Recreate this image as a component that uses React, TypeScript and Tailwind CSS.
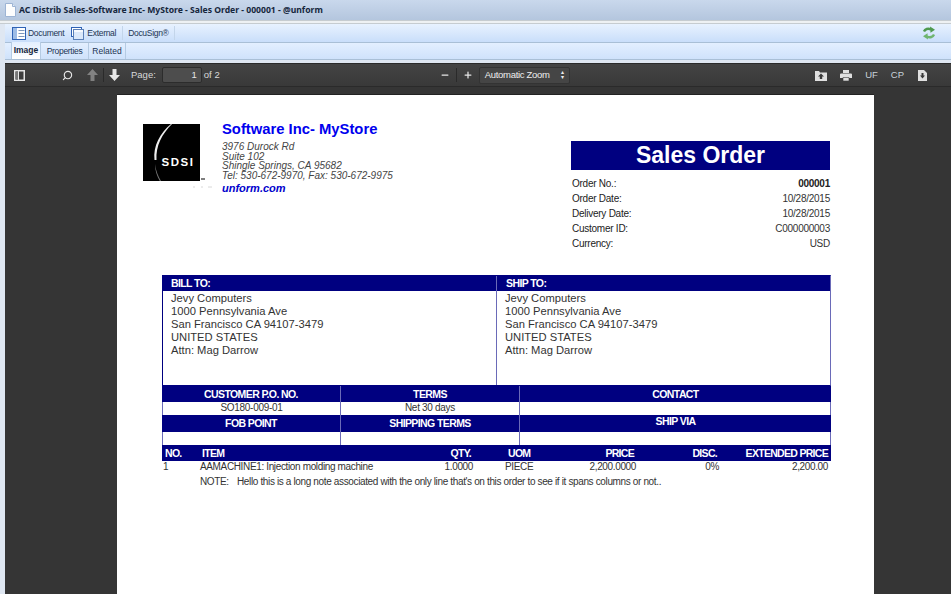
import { Search, Minus, Plus } from "lucide-react";

const SANS = "font-['Liberation_Sans',Arial,sans-serif]";
const NAVY = "bg-[#000080]";
const HEAD_COLS = "grid grid-cols-[37px_212px_57px_84px_79px_83px_1fr]";
const ROW_COLS = "grid grid-cols-[37px_216px_57px_80px_83px_83px_1fr]";

function DocIcon() {
  return (
    <svg width="11" height="14" viewBox="0 0 11 14">
      <path d="M.5.5h7l3 3v10H.5z" fill="#fdfdfd" stroke="#9db4d4" />
      <path d="M7.5.5v3h3" fill="#dfe9f5" stroke="#9db4d4" />
    </svg>
  );
}

function DocumentIcon() {
  return (
    <svg width="14" height="13" viewBox="0 0 14 13">
      <rect x=".5" y=".5" width="13" height="12" fill="#fff" stroke="#2f62b5" />
      <path d="M1 1h4v11H1z" fill="#9dbce6" />
      <path d="M6.500 3.500h6M6.500 6.500h6M6.500 9.500h6" stroke="#7d97bb" />
    </svg>
  );
}

function ExternalIcon() {
  return (
    <svg width="13" height="13" viewBox="0 0 13 13">
      <rect x=".5" y=".5" width="10" height="9" fill="#fff" stroke="#2f62b5" />
      <rect x="2.500" y="2.500" width="10" height="10" fill="#dbe8fa" stroke="#5b80b8" />
      <path d="M3 3h9v2H3z" fill="#f7faff" />
    </svg>
  );
}

function SyncIcon() {
  return (
    <svg width="14" height="14" viewBox="0 0 14 14" fill="none">
      <path d="M2 5.500C3 3 6 2 9 3.500" stroke="#4f9a4f" strokeWidth="2.400" />
      <path d="M8 .500l5 3.200-4.500 3z" fill="#4f9a4f" />
      <path d="M12 8.500C11 11 8 12 5 10.500" stroke="#6fb56f" strokeWidth="2.400" />
      <path d="M6 13.500l-5-3.200 4.500-3z" fill="#6fb56f" />
    </svg>
  );
}

function ArrowIcon({ down, dim }: { down?: boolean; dim?: boolean }) {
  return (
    <svg width="11" height="12" viewBox="0 0 11 12" className={dim ? "opacity-40" : ""}>
      <path d={down ? "M3.5 0h4v6H11L5.500 12 0 6h3.500z" : "M3.500 12h4V6H11L5.500 0 0 6h3.500z"} fill="#e6e6e6" />
    </svg>
  );
}

function SidebarIcon() {
  return (
    <svg width="11" height="11" viewBox="0 0 11 11">
      <rect x=".75" y=".75" width="9.500" height="9.500" fill="none" stroke="#e6e6e6" strokeWidth="1.500" />
      <path d="M4.500 1v9" stroke="#e6e6e6" />
      <rect x="1.500" y="1.500" width="2.500" height="8" fill="#777" />
    </svg>
  );
}

function OpenIcon() {
  return (
    <svg width="12" height="11" viewBox="0 0 12 11">
      <path d="M0 1h4l1 1.500h7V11H0z" fill="#e0e0e0" />
      <path d="M6 3.500 9 6.500H7.200V9H4.800V6.500H3z" fill="#3a3a3a" />
    </svg>
  );
}

function PrintIcon() {
  return (
    <svg width="12" height="11" viewBox="0 0 12 11">
      <path d="M3 0h6v3H3zM1 3.500h10a1 1 0 0 1 1 1V8H0V4.500a1 1 0 0 1 1-1z" fill="#e0e0e0" />
      <path d="M3 7.500h6V11H3z" fill="#e0e0e0" stroke="#3a3a3a" strokeWidth=".6" />
    </svg>
  );
}

function SaveIcon() {
  return (
    <svg width="9" height="11" viewBox="0 0 9 11">
      <path d="M0 0h6l3 3v8H0z" fill="#e0e0e0" />
      <path d="M3.500 3h2v2.500H7L4.500 8.500 2 5.500h1.500z" fill="#3a3a3a" />
    </svg>
  );
}

function Logo() {
  return (
    <div className="w-[57px] h-[57px] bg-black text-white relative shrink-0 flex items-end justify-center pb-[13px] pl-[13px]">
      <svg width="57" height="57" viewBox="0 0 57 57" className="absolute inset-0">
        <path d="M28 0C17 9 10 22 11.500 36L13.500 36C12.500 22 19 10 29 0z" fill="#ededed" />
        <path d="M12 40C13 47 15 52 18 57h-1.200C14 52 12 47 12 40z" fill="#777" />
      </svg>
      <span className={`${SANS} text-[11.500px] font-bold tracking-[1.500px] leading-none relative`}>SDSI</span>
      {/* trademark mark and faint specks below the logo */}
      <svg width="24" height="10" viewBox="0 0 24 10" className="absolute left-[50px] top-[54px]">
        <path d="M8 1h4" stroke="#555" strokeWidth="1.500" />
      </svg>
      <svg width="24" height="3" viewBox="0 0 24 3" className="absolute left-[50px] top-[62px]">
        <path d="M0 1h2M8 1h2M15 1h4" stroke="#d8d8d8" />
      </svg>
    </div>
  );
}

function HeaderCell({ children, className = "" }: { children: React.ReactNode; className?: string }) {
  return <div className={`flex-1 min-w-0 ${NAVY} text-white text-center font-bold text-[10.500px] tracking-[-0.6px] ${className}`}>{children}</div>;
}

const orderRows = [
  ["Order No.:", "000001"],
  ["Order Date:", "10/28/2015"],
  ["Delivery Date:", "10/28/2015"],
  ["Customer ID:", "C000000003"],
  ["Currency:", "USD"],
];

const addr = ["Jevy Computers", "1000 Pennsylvania Ave", "San Francisco CA 94107-3479", "UNITED STATES", "Attn: Mag Darrow"];

function Address() {
  return (
    <div className="text-[11.200px] leading-[13px] text-[#333] pt-[1px] pl-[8px]">
      {addr.map((l) => (
        <div key={l}>{l}</div>
      ))}
    </div>
  );
}

export default function App() {
  return (
    <div className="w-[951px] h-[594px] overflow-hidden bg-[#dfe7f2] flex flex-col font-['Noto_Sans',sans-serif]">
      {/* window title */}
      <div className="h-[20px] shrink-0 flex items-center gap-[3px] pl-[5px] bg-gradient-to-b from-[#c9d8ec] to-[#b4c6de]">
        <DocIcon />
        <span className="text-[8.600px] font-bold text-[#15263c] leading-none whitespace-nowrap">AC Distrib Sales-Software Inc- MyStore - Sales Order - 000001 - @unform</span>
      </div>
      <div className="h-[4px] shrink-0 bg-[#eef1f3] border-y border-[#c6ccd0]" />

      <div className="flex-1 min-h-0 pl-[5px] flex flex-col">
        {/* commands */}
        <div className={`h-[19px] shrink-0 flex items-center pl-[7px] pr-[15px] bg-gradient-to-b from-[#e8f2ff] to-[#c9defa] border-b border-[#a9bfd6] ${SANS} text-[8.500px] tracking-[-0.3px] text-[#1d3554]`}>
          <DocumentIcon />
          <span className="ml-[2px]">Document</span>
          <span className="ml-[7px]"><ExternalIcon /></span>
          <span className="ml-[3px]">External</span>
          <span className="ml-[6px] border-x border-[#c3d5ea] px-[5px] leading-[14px]">DocuSign®</span>
          <span className="ml-auto"><SyncIcon /></span>
        </div>

        {/* tabs */}
        <div className={`h-[17px] shrink-0 flex items-end pl-[6px] bg-gradient-to-b from-[#e3efff] to-[#cfe2fb] border-b border-[#a9bfd6] ${SANS} text-[8.500px] text-[#1d3554]`}>
          <div className="h-[17px] w-[30px] flex items-center justify-center font-bold text-[#15263c] bg-gradient-to-b from-[#e3efff] to-white border-x border-[#b5cbe3]">Image</div>
          <div className="h-[16px] w-[48px] flex items-center justify-center border-r border-[#b5cbe3] tracking-[-0.3px]">Properties</div>
          <div className="h-[16px] w-[37px] flex items-center justify-center border-r border-[#b5cbe3]">Related</div>
        </div>

        {/* pdf toolbar */}
        <div className={`h-[24px] mt-[3px] shrink-0 flex items-center bg-gradient-to-b from-[#444444] to-[#393939] border-y border-[#2a2a2a] text-[#d9d9d9] ${SANS} text-[9.500px]`}>
          <span className="ml-[9px]"><SidebarIcon /></span>
          <span className="ml-[37px]"><Search size={11} strokeWidth={2.500} className="-scale-x-100 text-[#e6e6e6]" /></span>
          <span className="ml-[14px]"><ArrowIcon dim /></span>
          <span className="ml-[5px] w-px h-[14px] bg-[#2a2a2a]" />
          <span className="ml-[5px]"><ArrowIcon down /></span>
          <span className="ml-[11px]">Page:</span>
          <span className="ml-[6px] w-[40px] h-[16px] rounded-[2px] bg-[#4d4d4d] border border-[#2c2c2c] text-right pr-[4px] leading-[14px] text-[#e6e6e6]">1</span>
          <span className="ml-[2px]">of 2</span>
          <span className="ml-[220px]"><Minus size={10} strokeWidth={3} className="text-[#e6e6e6]" /></span>
          <span className="ml-[6px] w-px h-[14px] bg-[#2a2a2a]" />
          <span className="ml-[6px]"><Plus size={10} strokeWidth={3} className="text-[#e6e6e6]" /></span>
          <div className="ml-[6px] w-[91px] h-[17px] rounded-[2px] bg-[#454545] border border-[#333] flex items-center justify-between pl-[5px] pr-[5px] text-[9.500px] tracking-[-0.3px] text-[#eee]">
            <span>Automatic Zoom</span>
            <span className="text-[6px] leading-[5px] flex flex-col">
              <span>▴</span>
              <span>▾</span>
            </span>
          </div>
          <div className="ml-auto mr-[24px] flex items-center text-[9.500px] text-[#c9d2da]">
            <OpenIcon />
            <span className="ml-[13px]"><PrintIcon /></span>
            <span className="ml-[13px]">UF</span>
            <span className="ml-[13px]">CP</span>
            <span className="ml-[14px]"><SaveIcon /></span>
          </div>
        </div>

        {/* viewer */}
        <div className="flex-1 min-h-0 bg-[#353535] pt-[7px] pl-[112px] overflow-hidden">
          <div className={`w-[757px] h-[600px] bg-white border-t border-[#222] ${SANS} text-[#333] pt-[29px] pl-[26px]`}>
            <div className="flex h-[151px]">
              <div className="w-[79px] shrink-0">
                <Logo />
              </div>
              <div>
                <div className="text-[14.800px] font-bold text-[#0000ee] leading-[17px] -mt-[3px]">Software Inc- MyStore</div>
                <div className="italic text-[10px] leading-[9.700px] mt-[4px] text-[#444]">
                  <div>3976 Durock Rd</div>
                  <div>Suite 102</div>
                  <div>Shingle Springs, CA 95682</div>
                  <div>Tel: 530-672-9970, Fax: 530-672-9975</div>
                </div>
                <div className="italic font-bold text-[11px] leading-[13px] text-[#0000cc] mt-[1px]">unform.com</div>
              </div>
              <div className="ml-auto mr-[44px] w-[259px] mt-[17px]">
                <div className={`${NAVY} text-white h-[29px] text-center text-[23px] font-bold leading-[29px]`}>Sales Order</div>
                <div className="mt-[6px] pl-[1px] text-[10px] tracking-[-0.25px] leading-[15px]">
                  {orderRows.map(([k, v], i) => (
                    <div key={k} className="flex justify-between">
                      <span className="font-medium text-[#222]">{k}</span>
                      <span className={i === 0 ? "font-bold text-[#222]" : ""}>{v}</span>
                    </div>
                  ))}
                </div>
              </div>
            </div>

            {/* address + order tables */}
            <div className="ml-[19px] w-[669px] text-[#333]">
              <div className="flex h-[111px] border border-[#000080] border-r-[#6a6ab8]">
                <div className="flex-1 flex flex-col border-r border-[#6a6ab8]">
                  <div className={`${NAVY} text-white h-[15px] font-bold text-[10.500px] tracking-[-0.6px] leading-[15px] pl-[8px]`}>BILL TO:</div>
                  <Address />
                </div>
                <div className="w-[333px] flex flex-col">
                  <div className={`${NAVY} text-white h-[15px] font-bold text-[10.500px] tracking-[-0.6px] leading-[15px] pl-[9px]`}>SHIP TO:</div>
                  <Address />
                </div>
              </div>

              <div className="flex h-[16px]">
                <HeaderCell className="leading-[16px] max-w-[179px] border-r border-[#6a6ab8]">CUSTOMER P.O. NO.</HeaderCell>
                <HeaderCell className="leading-[16px] max-w-[179px] border-r border-[#6a6ab8]">TERMS</HeaderCell>
                <HeaderCell className="leading-[16px]">CONTACT</HeaderCell>
              </div>
              <div className="flex h-[13px] text-center text-[10px] tracking-[-0.3px] leading-[12px] border-x border-[#6a6ab8]">
                <div className="w-[178px] border-r border-[#6a6ab8]">SO180-009-01</div>
                <div className="w-[179px] border-r border-[#6a6ab8]">Net 30 days</div>
                <div className="flex-1" />
              </div>
              <div className="flex h-[17px]">
                <HeaderCell className="leading-[17px] max-w-[179px] border-r border-[#6a6ab8]">FOB POINT</HeaderCell>
                <HeaderCell className="leading-[17px] max-w-[179px] border-r border-[#6a6ab8]">SHIPPING TERMS</HeaderCell>
                <HeaderCell className="leading-[13px]">SHIP VIA</HeaderCell>
              </div>
              <div className="flex h-[13px] border-x border-[#6a6ab8]">
                <div className="w-[178px] border-r border-[#6a6ab8]" />
                <div className="w-[179px] border-r border-[#6a6ab8]" />
                <div className="flex-1" />
              </div>

              {/* line items */}
              <div className={`${NAVY} text-white h-[16px] font-bold text-[10.500px] tracking-[-0.7px] leading-[16px] ${HEAD_COLS} pl-[3px]`}>
                <span>NO.</span>
                <span>ITEM</span>
                <span className="text-right">QTY.</span>
                <span className="pl-[37px]">UOM</span>
                <span className="text-right">PRICE</span>
                <span className="text-right">DISC.</span>
                <span className="text-right pr-[3px] whitespace-nowrap">EXTENDED PRICE</span>
              </div>
              <div className={`h-[11px] text-[10px] tracking-[-0.36px] leading-[11px] ${ROW_COLS} pl-[1px]`}>
                <span>1</span>
                <span className="whitespace-nowrap">AAMACHINE1: Injection molding machine</span>
                <span className="text-right">1.0000</span>
                <span className="pl-[32px]">PIECE</span>
                <span className="text-right">2,200.0000</span>
                <span className="text-right">0%</span>
                <span className="text-right pr-[3px]">2,200.00</span>
              </div>
              <div className="mt-[4px] pl-[38px] text-[10px] tracking-[-0.36px] leading-[12px] flex">
                <span className="w-[37px]">NOTE:</span>
                <span>Hello this is a long note associated with the only line that's on this order to see if it spans columns or not..</span>
              </div>
            </div>
          </div>
        </div>
      </div>
    </div>
  );
}
